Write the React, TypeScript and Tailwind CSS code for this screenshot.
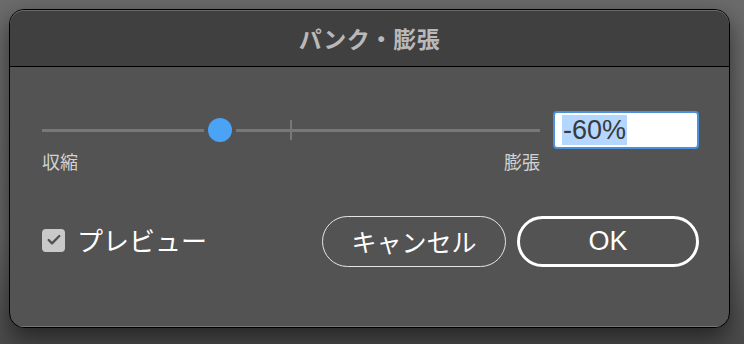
import { Check } from 'lucide-react'

const jp = { fontFamily: '"Noto Sans CJK JP", "Noto Sans", sans-serif' }
const latin = { fontFamily: '"Liberation Sans", Arial, sans-serif' }

function Slider() {
  return (
    <div className="relative flex-1 h-[38px]">
      <div className="absolute left-0 top-[18px] h-[3px] w-[162px] bg-[#787878]" />
      <div className="absolute left-[194px] top-[18px] h-[3px] right-0 bg-[#787878]" />
      <div className="absolute left-[248px] top-[9px] h-[20px] w-[2px] bg-[#787878]" />
      <div className="absolute left-[166px] top-[7px] h-[24px] w-[24px] rounded-full bg-[#4ba3f6]" />
    </div>
  )
}

export default function App() {
  return (
    <div className="w-[744px] h-[344px] overflow-hidden bg-[linear-gradient(#6b6b6b,#666_70%,#4a4a4a)] pt-[9px] pl-[9px]">
      <div className="w-[721px] h-[319px] rounded-[15px] border border-black bg-[#535353] overflow-hidden shadow-[0_10px_24px_rgba(0,0,0,0.55)] flex flex-col">
        <div className="h-[57px] shrink-0 bg-[#414041] border-b border-black flex items-center justify-center rounded-t-[14px] shadow-[inset_0_1px_0_#6a6a6a]">
          <span className="text-[23px] font-bold text-[#b9b9b9] tracking-[0.5px]" style={jp}>パンク・膨張</span>
        </div>
        <div className="flex-1 flex flex-col pl-[32px] pr-[30px] shadow-[inset_0_-1px_0_#777]">
          <div className="mt-[44px] flex items-center gap-[13px]">
            <Slider />
            <div className="w-[146px] h-[38px] rounded-[4px] border-2 border-[#4a90dc] bg-white flex items-center pl-[7px]">
              <span className="bg-[#b3d7ff] text-[27px] leading-[30px] text-[#3a3a3a] px-[1px]" style={latin}>-60%</span>
            </div>
          </div>
          <div className="mt-[1px] w-[498px] flex justify-between text-[18px] leading-[22px] text-[#d2d2d2]" style={jp}>
            <span>収縮</span>
            <span>膨張</span>
          </div>
          <div className="mt-[44px] flex items-center">
            <div className="flex items-center gap-[12px] -mt-[3px]">
              <div className="w-[23px] h-[23px] rounded-[4px] bg-[#c9c9c9] flex items-center justify-center">
                <Check size={16} strokeWidth={3.5} className="text-[#505050]" />
              </div>
              <span className="text-[26px] text-white leading-[32px]" style={jp}>プレビュー</span>
            </div>
            <div className="ml-auto flex gap-[11px]">
              <button className="w-[184px] h-[51px] rounded-full border-[1.5px] border-[#e6e6e6] text-white text-[25px] flex items-center justify-center" style={jp}>
                キャンセル
              </button>
              <button className="w-[182px] h-[51px] rounded-full border-[3px] border-white text-white text-[27px] flex items-center justify-center" style={latin}>
                OK
              </button>
            </div>
          </div>
        </div>
      </div>
    </div>
  )
}
